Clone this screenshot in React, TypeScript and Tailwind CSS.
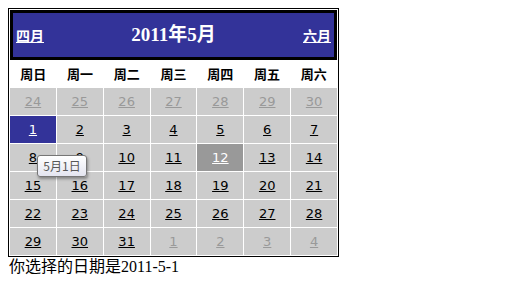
type Day = { n: number; other?: boolean; selected?: boolean; today?: boolean };

const weekNames = ['周日', '周一', '周二', '周三', '周四', '周五', '周六'];

function buildDays(): Day[] {
  const days: Day[] = [];
  for (let n = 24; n <= 30; n++) days.push({ n, other: true });
  for (let n = 1; n <= 31; n++) days.push({ n, selected: n === 1, today: n === 12 });
  for (let n = 1; n <= 4; n++) days.push({ n, other: true });
  return days;
}

const cjk = "font-['Noto_Sans_CJK_SC',sans-serif]";

export default function App() {
  const days = buildDays();

  return (
    <div className="relative min-h-[292px] w-[512px] bg-white pl-2 pt-2">
      <div className="w-[331px] border border-black bg-white p-px">
        {/* Title */}
        <div className="flex h-[50px] items-center border-[3px] border-black bg-[#333399] px-[3px] text-white">
          <span className={`w-[60px] text-[14px] font-bold underline ${cjk}`}>四月</span>
          <span className="flex-1 text-center text-[19px] font-bold font-['Liberation_Serif','Noto_Sans_CJK_SC',serif]">
            2011年5月
          </span>
          <span className={`w-[60px] text-right text-[14px] font-bold underline ${cjk}`}>六月</span>
        </div>

        {/* Week names */}
        <div className="grid h-[28px] grid-cols-7 items-center">
          {weekNames.map((w) => (
            <div key={w} className={`text-center text-[13px] font-bold text-black ${cjk}`}>
              {w}
            </div>
          ))}
        </div>

        {/* Days */}
        <div className="grid grid-cols-7 gap-px bg-white">
          {days.map((d, i) => {
            const bg = d.selected ? 'bg-[#333399]' : d.today ? 'bg-[#999999]' : 'bg-[#cccccc]';
            const fg = d.selected || d.today ? 'text-white' : d.other ? 'text-[#999999]' : 'text-black';
            return (
              <div
                key={i}
                className={`flex h-[27px] items-center justify-center text-[13px] underline font-['DejaVu_Sans',sans-serif] ${bg} ${fg}`}
              >
                {d.n}
              </div>
            );
          })}
        </div>
      </div>

      <div className="ml-px mt-px text-[16px] leading-[18px] text-black font-['Liberation_Serif','Noto_Sans_CJK_SC',serif]">
        你选择的日期是2011-5-1
      </div>

      {/* Tooltip */}
      <div
        className={`absolute left-[37px] top-[155px] flex h-[22px] w-[50px] items-center justify-center rounded-[3px] border border-[#767676] bg-gradient-to-b from-white to-[#e4e5f0] text-[12px] text-[#575757] shadow-[1px_2px_3px_rgba(0,0,0,0.35)] ${cjk}`}
      >
        5月1日
      </div>
    </div>
  );
}
